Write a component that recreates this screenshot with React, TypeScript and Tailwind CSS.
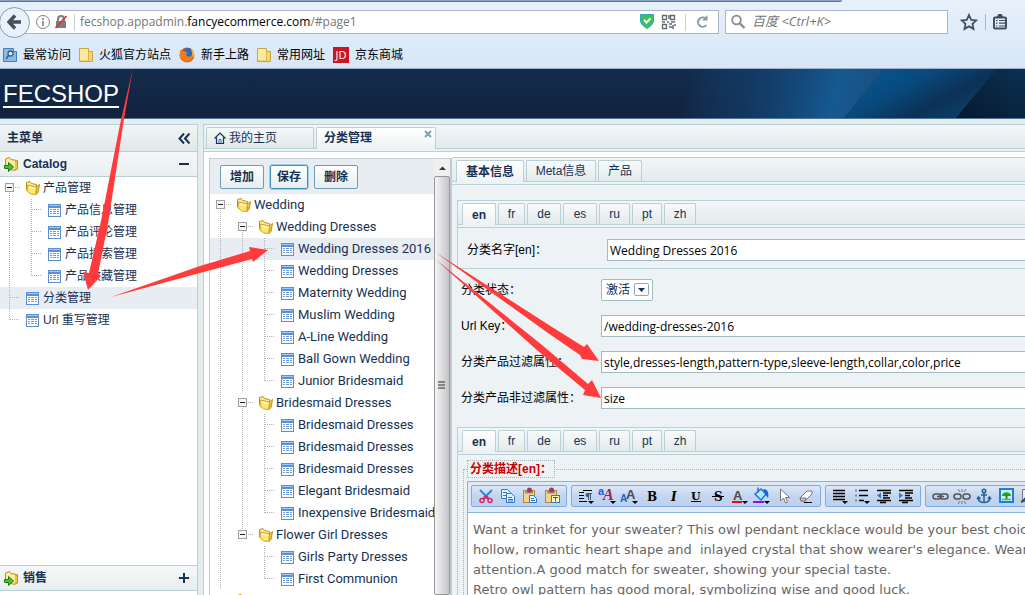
import React, { useState } from "react";

const line = "border-[#b8d0d6]";
const cjk = "font-['Liberation_Sans','Noto_Sans_CJK_SC',sans-serif]";

type Cell = "line" | "branch" | "last" | "minus" | "none" | "minusLast";
type Row = { label: string; cells: Cell[]; folder?: boolean; active?: boolean };

const menuRows: Row[] = [
  { label: "产品管理", cells: ["minus"], folder: true },
  { label: "产品信息管理", cells: ["line", "branch"] },
  { label: "产品评论管理", cells: ["line", "branch"] },
  { label: "产品搜索管理", cells: ["line", "branch"] },
  { label: "产品收藏管理", cells: ["line", "last"] },
  { label: "分类管理", cells: ["branch"], active: true },
  { label: "Url 重写管理", cells: ["last"] },
];

const leaf = (label: string, last = false, parentLine = true, active = false): Row => ({
  label,
  cells: ["line", parentLine ? "line" : "none", last ? "last" : "branch"],
  active,
});

const categoryRows: Row[] = [
  { label: "Wedding", cells: ["minus"], folder: true },
  { label: "Wedding Dresses", cells: ["line", "minus"], folder: true },
  leaf("Wedding Dresses 2016", false, true, true),
  leaf("Wedding Dresses"),
  leaf("Maternity Wedding"),
  leaf("Muslim Wedding"),
  leaf("A-Line Wedding"),
  leaf("Ball Gown Wedding"),
  leaf("Junior Bridesmaid", true),
  { label: "Bridesmaid Dresses", cells: ["line", "minus"], folder: true },
  leaf("Bridesmaid Dresses"),
  leaf("Bridesmaid Dresses"),
  leaf("Bridesmaid Dresses"),
  leaf("Elegant Bridesmaid"),
  leaf("Inexpensive Bridesmaid", true),
  { label: "Flower Girl Dresses", cells: ["line", "minusLast"], folder: true },
  leaf("Girls Party Dresses", false, false),
  leaf("First Communion", true, false),
  { label: "", cells: ["minus"], folder: true },
];

function TreeCell({ kind }: { kind: Cell }) {
  const box = kind === "minus" || kind === "minusLast";
  return (
    <svg width="22" height="22" className="shrink-0" aria-hidden="true" shapeRendering="crispEdges">
      <g stroke="#b4b4b4" strokeDasharray="1 1" fill="none">
        {(kind === "line" || kind === "branch") && <path d="M10.5 0V22" />}
        {kind === "last" && <path d="M10.5 0V11" />}
        {kind === "minus" && <path d="M10.5 16V22" />}
        {kind === "minusLast" && <path d="M10.5 0V6" />}
        {(kind === "branch" || kind === "last") && <path d="M11 10.5H21" />}
        {box && <path d="M16 10.5H21" />}
      </g>
      {box && (
        <>
          <rect x="6.5" y="6.5" width="8" height="8" rx="1" fill="#f6f6f6" stroke="#a0a0a0" />
          <path d="M8 10.5h5" stroke="#222" />
        </>
      )}
    </svg>
  );
}

function FolderIcon() {
  return (
    <svg width="22" height="22" className="shrink-0" aria-hidden="true">
      <path d="M5.5 5.500l3.500-1 1.500 2 5 1v7l-6 1-4-2.500z" fill="#fbeb9a" stroke="#bd8f1e" />
      <path d="M15.500 10l3-2.500-1.500 8-2 2z" fill="#f3c93e" stroke="#bd8f1e" />
      <path d="M6.500 8l9 2-.800 7.500-5-.500-3.700-3z" fill="#fde86e" stroke="#d3a52a" />
      <path d="M8 10l6 1.500" stroke="#fff9d0" strokeWidth="1.500" />
    </svg>
  );
}

function SheetIcon() {
  return (
    <svg width="22" height="22" className="shrink-0" aria-hidden="true" shapeRendering="crispEdges">
      <rect x="5.500" y="5.500" width="12" height="12" fill="#fff" stroke="#5b8fd2" />
      <rect x="5" y="5" width="13" height="4" fill="#5b8fd2" />
      <path d="M6 6.500h11" stroke="#a4c8f0" />
      <path d="M7 10.500h9M7 12.500h9M7 14.500h9" stroke="#6f9ad0" />
      <path d="M9.500 9v8M13.500 9v8" stroke="#fff" />
    </svg>
  );
}

function Tree({ rows, font }: { rows: Row[]; font: string }) {
  return (
    <ul className={font}>
      {rows.map((r, i) => (
        <li key={i} className={`flex h-[22px] items-center whitespace-nowrap ${r.active ? "bg-[#e8ecf3]" : ""}`}>
          {r.cells.map((c, j) => (
            <TreeCell key={j} kind={c} />
          ))}
          {r.folder ? <FolderIcon /> : <SheetIcon />}
          <a href="#page1" className="leading-[22px] text-[#183152]">{r.label}</a>
        </li>
      ))}
    </ul>
  );
}

function TabStrip({ pad, children }: { pad: string; children: React.ReactNode }) {
  return (
    <div className={`border-t ${line}`}>
      <div className={`flex h-6 gap-[2px] border-b bg-gradient-to-b from-[#f2f6f8] to-[#e3ebec] ${line} ${pad} pt-[2px]`}>
        {children}
      </div>
      <div className={`h-[3px] border-b bg-[#edf2f4] ${line}`} />
    </div>
  );
}

function Tab({ label, active, width, onClick }: { label: string; active: boolean; width: string; onClick: () => void }) {
  return (
    <button
      type="button"
      onClick={onClick}
      className={`${width} shrink-0 rounded-t-[2px] border border-b-0 text-center text-[12px] leading-[20px] text-[#183152] ${line} ${
        active ? "-mb-px bg-gradient-to-b from-white to-[#edf2f4] font-bold" : "bg-gradient-to-b from-[#f7fafa] to-[#e2eaeb]"
      }`}
    >
      {label}
    </button>
  );
}

const langs: [string, string][] = [
  ["en", "w-[34px]"],
  ["fr", "w-[27px]"],
  ["de", "w-[34px]"],
  ["es", "w-[34px]"],
  ["ru", "w-[31px]"],
  ["pt", "w-[30px]"],
  ["zh", "w-[32px]"],
];

function LangTabs() {
  const [cur, setCur] = useState("en");
  return (
    <TabStrip pad="pl-1">
      {langs.map(([l, w]) => (
        <Tab key={l} label={l} width={w} active={cur === l} onClick={() => setCur(l)} />
      ))}
    </TabStrip>
  );
}

const inputCls =
  "h-[22px] w-[640px] shrink-0 border border-[#a2bac0] bg-white px-[2px] font-['Open_Sans','Noto_Sans_CJK_SC',sans-serif] text-[12px] text-black outline-none";

function Field({ id, label, value }: { id: string; label: string; value: string }) {
  return (
    <div className="flex h-[22px] items-center">
      <label htmlFor={id} className="w-[140px] shrink-0">{label}</label>
      <input id={id} className={inputCls} defaultValue={value} />
    </div>
  );
}

function ToolButton({ name, children }: { name: string; children: React.ReactNode }) {
  return (
    <button type="button" title={name} aria-label={name} className="flex h-5 w-[22px] items-center justify-center">
      <svg width="20" height="20" aria-hidden="true">{children}</svg>
    </button>
  );
}

function ToolGroup({ children }: { children: React.ReactNode }) {
  return (
    <div className="flex h-[22px] shrink-0 rounded-[2px] border border-[#7fabe0] bg-gradient-to-b from-[#dde7f6] via-[#c3d5f0] to-[#bcd1ee] px-[3px]">
      {children}
    </div>
  );
}

const caret = <path d="M12 15h6l-3 3z" fill="#000" />;

function EditorToolbar() {
  return (
    <div className="flex gap-1 overflow-hidden border-b border-[#8cb2e4] bg-[#e0e9f7] px-[3px] pt-[3px] pb-[5px]">
      <ToolGroup>
        <ToolButton name="剪切">
          <path d="M4 4l9 9M16 4L7 13" stroke="#2f86d8" strokeWidth="2" />
          <path d="M8 10l4 3M12 10l-4 3" stroke="#d7266a" strokeWidth="1.500" />
          <circle cx="6" cy="14.500" r="2" fill="none" stroke="#d7266a" strokeWidth="1.500" />
          <circle cx="14" cy="14.500" r="2" fill="none" stroke="#d7266a" strokeWidth="1.500" />
        </ToolButton>
        <ToolButton name="复制">
          <path d="M3.500 3.500h6l3 3v6h-9z" fill="#e4f1ff" stroke="#2a7bd0" />
          <path d="M8.500 7.500h5l3 3v6h-8z" fill="#e4f1ff" stroke="#2a7bd0" />
          <path d="M5 6.500h4M5 9.500h3M10 11.500h4M10 13.500h5M10 15h5" stroke="#2a7bd0" />
        </ToolButton>
        <ToolButton name="粘贴">
          <rect x="3.500" y="4.500" width="11" height="12" fill="#f2d58a" stroke="#b1873c" />
          <path d="M5 4.500h8v3H5z" fill="#9a8a92" />
          <circle cx="9.500" cy="4" r="2.500" fill="#a13763" />
          <path d="M9.500 9.500h4l3 3v4h-7z" fill="#e4f1ff" stroke="#2a7bd0" />
          <path d="M11 12.500h3M11 14.500h4" stroke="#2a7bd0" />
        </ToolButton>
        <ToolButton name="粘贴文本">
          <rect x="3.500" y="4.500" width="11" height="12" fill="#f2d58a" stroke="#b1873c" />
          <path d="M5 4.500h8v3H5z" fill="#9a8a92" />
          <circle cx="9.500" cy="4" r="2.500" fill="#a13763" />
          <rect x="9.500" y="9.500" width="8" height="7" fill="#fff6b8" stroke="#2a7bd0" />
          <path d="M11 11.500h5M13.500 11.500v4" stroke="#1c5eb0" />
        </ToolButton>
      </ToolGroup>
      <ToolGroup>
        <ToolButton name="段落标签">
          <path d="M3 6.500h5M3 9.500h5M3 12.500h5M3 15.500h8M7 4.500h9" stroke="#000" />
          <path d="M11 7.500h5M12.500 7v7M14.500 7v7" stroke="#44587a" />
          <circle cx="11.500" cy="9" r="2" fill="#44587a" />
          {caret}
        </ToolButton>
        <ToolButton name="字体">
          <text x="0" y="9" fontSize="11" fontWeight="bold" fontFamily="Liberation Sans" fill="#1265d8">a</text>
          <text x="5" y="14" fontSize="16" fontWeight="bold" fontStyle="italic" fontFamily="Liberation Serif" fill="#a2214f">A</text>
          {caret}
        </ToolButton>
        <ToolButton name="字体大小">
          <text x="0" y="16" fontSize="10" fontWeight="bold" fontFamily="Liberation Sans" fill="#1265d8">A</text>
          <text x="6" y="13" fontSize="13" fontWeight="bold" fontFamily="Liberation Sans" fill="#4b4b4b">A</text>
          {caret}
        </ToolButton>
        <ToolButton name="加粗">
          <text x="5" y="15" fontSize="12" fontWeight="bold" fontFamily="DejaVu Serif">B</text>
        </ToolButton>
        <ToolButton name="斜体">
          <text x="7" y="15" fontSize="12" fontWeight="bold" fontStyle="italic" fontFamily="DejaVu Serif">I</text>
        </ToolButton>
        <ToolButton name="下划线">
          <text x="5" y="14" fontSize="11" fontWeight="bold" fontFamily="DejaVu Serif">U</text>
          <path d="M5 15.500h10" stroke="#000" />
        </ToolButton>
        <ToolButton name="删除线">
          <text x="6" y="15" fontSize="12" fontWeight="bold" fontFamily="DejaVu Serif">S</text>
          <path d="M4 10.500h12" stroke="#000" />
        </ToolButton>
        <ToolButton name="字体颜色">
          <text x="3" y="14" fontSize="13" fontWeight="bold" fontFamily="Liberation Sans" fill="#4b4b4b">A</text>
          <path d="M2 16h10" stroke="#e01010" strokeWidth="2" />
          {caret}
        </ToolButton>
        <ToolButton name="背景颜色">
          <path d="M3 8l6-5 5 5-5 6z" fill="#bfe2ff" stroke="#1b78d4" strokeWidth="1.500" />
          <path d="M11 3c5 0 6 4 5 9l-3-4z" fill="#1565d8" />
          <path d="M6 1.500v5" stroke="#1b78d4" strokeWidth="1.500" />
          <path d="M1 16h11" stroke="#8a12e8" strokeWidth="2" />
          {caret}
        </ToolButton>
        <ToolButton name="全选">
          <path d="M6.500 3v12l3-3 2 5 2-1-2-4.500h4z" fill="#fff" stroke="#777" />
        </ToolButton>
        <ToolButton name="删除文字格式">
          <path d="M4 12l7-7h5v3l-7 7H5z" fill="#fafafa" stroke="#777" />
          <path d="M4 12l1 3h4l1-3z" fill="#c9c9c9" stroke="#777" />
          <path d="M8 16.500h8" stroke="#000" />
        </ToolButton>
      </ToolGroup>
      <ToolGroup>
        <ToolButton name="对齐">
          <path d="M3 4.500h12M3 7.500h12M3 10.500h12M3 13.500h12" stroke="#000" strokeWidth="1.300" />
          {caret}
        </ToolButton>
        <ToolButton name="列表">
          <path d="M7 4.500h9M7 9.500h9M7 14.500h5" stroke="#000" strokeWidth="1.300" />
          <path d="M3 4.500h2M3 9.500h2M3 14.500h2" stroke="#7d8ba5" strokeWidth="2" />
          {caret}
        </ToolButton>
        <ToolButton name="减少缩进">
          <path d="M3 4.500h14M9 7h8M9 9.500h5M9 12h7M3 14.500h14M6 16.500h6" stroke="#000" strokeWidth="1.300" />
          <path d="M7 6.500v6L3 9.500z" fill="#2a7bd0" />
        </ToolButton>
        <ToolButton name="增加缩进">
          <path d="M3 4.500h14M9 7h8M9 9.500h5M9 12h7M3 14.500h14M6 16.500h6" stroke="#000" strokeWidth="1.300" />
          <path d="M3 6.500v6l4-3z" fill="#2a7bd0" />
        </ToolButton>
      </ToolGroup>
      <ToolGroup>
        <ToolButton name="超链接">
          <rect x="3" y="8" width="8" height="5" rx="2.500" fill="none" stroke="#555" strokeWidth="1.500" />
          <rect x="10" y="8" width="8" height="5" rx="2.500" fill="none" stroke="#555" strokeWidth="1.500" />
          <path d="M7 10.500h7" stroke="#555" strokeWidth="1.500" />
        </ToolButton>
        <ToolButton name="取消超链接">
          <rect x="2" y="8" width="7" height="5" rx="2.500" fill="none" stroke="#555" strokeWidth="1.500" />
          <rect x="11" y="8" width="7" height="5" rx="2.500" fill="none" stroke="#555" strokeWidth="1.500" />
          <path d="M10 3v3M6 3l2 3M14 3l-2 3M10 18v-3M6 18l2-3M14 18l-2-3M8 12l4-3" stroke="#777" />
        </ToolButton>
        <ToolButton name="锚点">
          <g fill="none" stroke="#2b649c" strokeWidth="1.600">
            <circle cx="10" cy="5" r="1.700" />
            <path d="M10 7v9M7 9h6M4 11c0 4 3 5.500 6 5.500s6-1.500 6-5.500M3 13l1.500-2 2 2M14 13l1.500-2 1.500 2" />
          </g>
        </ToolButton>
        <ToolButton name="图片">
          <rect x="4" y="3" width="13" height="13" fill="#c7f0ef" stroke="#1f7de0" strokeWidth="2" />
          <path d="M6 10c0-5 9-5 9 0z" fill="#27a027" />
          <path d="M10.500 9v4" stroke="#3b7d2a" strokeWidth="2" />
          <path d="M6 13.500h9" stroke="#58b848" strokeWidth="1.500" />
        </ToolButton>
        <ToolButton name="动画">
          <path d="M4.500 3.500h10v12h-10z" fill="#eee" stroke="#777" />
          <path d="M3 16c3-1 5-4 7-8" stroke="#345" strokeWidth="2" fill="none" />
        </ToolButton>
        <ToolButton name="表格">
          <rect x="3.500" y="3.500" width="12" height="12" fill="#fff" stroke="#777" />
        </ToolButton>
      </ToolGroup>
    </div>
  );
}

function YellowFolder() {
  return (
    <svg width="14" height="16" aria-hidden="true">
      <path d="M.5 1.500h9v3h4v10H.5z" fill="#f3d66c" stroke="#c9a646" />
      <path d="M1 2h8v11H1z" fill="#fbeaa0" />
      <path d="M9.500 5v9" stroke="#d9b653" />
    </svg>
  );
}

const bookmarks: { label: string; icon: React.ReactNode }[] = [
  {
    label: "最常访问",
    icon: (
      <svg width="14" height="16" aria-hidden="true">
        <path d="M.5 1.500h10v3h3v10H.5z" fill="#8dbbe0" stroke="#4580b3" />
        <circle cx="7.500" cy="6.500" r="2.500" fill="#d8ecfb" stroke="#2f6390" strokeWidth="1.300" />
        <path d="M5.500 8.500L3 12" stroke="#2f6390" strokeWidth="1.600" />
      </svg>
    ),
  },
  { label: "火狐官方站点", icon: <YellowFolder /> },
  {
    label: "新手上路",
    icon: (
      <svg width="16" height="16" aria-hidden="true">
        <circle cx="8" cy="8" r="7.500" fill="#e2601a" />
        <circle cx="9" cy="6" r="5" fill="#2a6cb8" />
        <path d="M1 3c1 1 2 1 3 1 2-.5 3 1 5 2l-2 1.500c1 3 5 3 7-1 .5 6-4 8-7 8S1 12 1 8z" fill="#ee7d1b" />
        <path d="M12 2c3 2 4 6 2 9-.5-3-1-6-2-9z" fill="#fbc52e" />
      </svg>
    ),
  },
  { label: "常用网址", icon: <YellowFolder /> },
  {
    label: "京东商城",
    icon: (
      <span className="flex h-4 w-4 items-center justify-center bg-[#c81623] text-[11px] leading-4 text-white">JD</span>
    ),
  },
];

function BrowserChrome() {
  return (
    <div className="flex h-[69px] shrink-0 flex-col border-b border-[#9fb0c6] bg-gradient-to-b from-[#e8f1fb] to-[#d7e6f7] font-['Open_Sans','Noto_Sans_CJK_SC',sans-serif]">
      <div className="h-[2px] w-[842px] shrink-0 rounded-br-[3px] border-b border-[#5f7690] bg-[#8ba3bf]" />
      <div className="flex h-10 shrink-0 items-center">
        <button type="button" aria-label="后退" className="z-10 -ml-px flex h-[31px] w-[31px] shrink-0 items-center justify-center rounded-full border border-[#8e9cb0] bg-[#e9f1fa]">
          <svg width="17" height="16" aria-hidden="true">
            <path d="M9 1.500L3 8l6 6.500M3.500 8H15" fill="none" stroke="#45505f" strokeWidth="3.400" />
          </svg>
        </button>
        <div className="-ml-4 flex h-6 min-w-0 flex-1 items-center border border-[#a9b6c8] bg-white pl-5">
          <svg width="45" height="22" className="shrink-0" aria-hidden="true">
            <circle cx="8" cy="11" r="6.500" fill="none" stroke="#808080" />
            <path d="M8 7v2M8 10v5" stroke="#808080" strokeWidth="1.600" />
            <rect x="21" y="10" width="10" height="7" fill="#7d7d7d" />
            <path d="M23 10V8a3 3 0 0 1 6 0v2" fill="none" stroke="#7d7d7d" strokeWidth="2" />
            <path d="M20.500 17L31.500 5" stroke="#d9343a" strokeWidth="1.800" />
            <path d="M39.500 3v17" stroke="#ccc" />
          </svg>
          <div className="min-w-0 flex-1 text-[12px] leading-5 whitespace-nowrap text-[#767676]">
            fecshop.appadmin.<span className="text-black">fancyecommerce.com</span>/#page1
          </div>
          <svg width="79" height="22" className="shrink-0" aria-hidden="true">
            <path d="M1.500 3.500h13v7q-1 4-6.500 7-5.500-3-6.500-7z" fill="#3fbf5f" stroke="#2ba6c4" />
            <path d="M5 9l2.500 2.500 4-4" fill="none" stroke="#fff" strokeWidth="2" />
            <g fill="none" stroke="#5f6a75" strokeWidth="1.300">
              <path d="M23.500 4.500h4v4h-4zM31.500 4.500h4v4h-4zM23.500 13.500h4v4h-4z" />
              <path d="M23 11h3M28 11h2M30 4v4M32 11h4M30 13h3M34 14v4M30 16h3M36 13v2" strokeWidth="1.500" />
            </g>
            <path d="M46.500 3v17" stroke="#ccc" />
            <path d="M66.500 7.500a4.600 4.600 0 1 0 .8 6.500" fill="none" stroke="#8b98a6" strokeWidth="2" />
            <path d="M63 9.500h5.500v-5.500z" fill="#8b98a6" />
          </svg>
        </div>
        <label className="ml-[6px] flex h-6 w-[223px] shrink-0 items-center border border-[#a9b6c8] bg-white">
          <svg width="26" height="20" className="shrink-0" aria-hidden="true">
            <circle cx="10.500" cy="8" r="4.300" fill="none" stroke="#8a8a8a" strokeWidth="1.800" />
            <path d="M13.500 11l5 5" stroke="#8a8a8a" strokeWidth="2.400" />
          </svg>
          <input aria-label="搜索" placeholder="百度 <Ctrl+K>" className="w-full min-w-0 text-[13px] italic outline-none placeholder:text-[#757575]" />
        </label>
        <svg width="77" height="24" className="shrink-0" aria-hidden="true">
          <path d="M21 5l2.200 4.800 5 .600-3.700 3.500 1 5-4.500-2.500-4.500 2.500 1-5-3.700-3.500 5-.600z" fill="none" stroke="#454f5c" strokeWidth="1.800" />
          <path d="M37.500 4v16" stroke="#a9b6c8" />
          <rect x="46" y="7.500" width="12" height="11" rx="1" fill="none" stroke="#454f5c" strokeWidth="2" />
          <path d="M48.500 7l2-3h3l2 3z" fill="#454f5c" />
          <path d="M48 10.500h1.500M51 10.500h6M48 13.200h1.500M51 13.200h6M48 16h1.500M51 16h6" stroke="#454f5c" strokeWidth="1.200" />
        </svg>
      </div>
      <div className="flex h-[26px] items-center gap-2 pl-[3px] text-[12px] text-black">
        {bookmarks.map((b) => (
          <a key={b.label} href="#page1" className="flex items-center gap-[6px]">
            {b.icon}
            <span>{b.label}</span>
          </a>
        ))}
      </div>
    </div>
  );
}

function ShopHeader() {
  return (
    <header className="relative h-[50px] shrink-0 overflow-hidden border-b border-[#4d7590] bg-gradient-to-b from-[#122c4b] to-[#12223f]">
      <svg className="absolute top-0 right-0" width="405" height="49" aria-hidden="true">
        <defs>
          <linearGradient id="glow" gradientUnits="userSpaceOnUse" x1="70" y1="0" x2="260" y2="50">
            <stop offset="0" stopColor="#155a92" stopOpacity="0" />
            <stop offset=".3" stopColor="#13467a" stopOpacity=".5" />
            <stop offset=".75" stopColor="#155a92" />
            <stop offset="1" stopColor="#1c4c78" />
          </linearGradient>
          <linearGradient id="band" x1="0" x2="1" y1="0" y2=".6">
            <stop offset="0" stopColor="#075a97" />
            <stop offset=".45" stopColor="#08497c" />
            <stop offset=".75" stopColor="#0c3156" />
            <stop offset="1" stopColor="#0a4068" />
          </linearGradient>
          <linearGradient id="edge" x1="0" x2="1" y1="1" y2="0">
            <stop offset="0" stopColor="#07192e" />
            <stop offset="1" stopColor="#0a3153" />
          </linearGradient>
        </defs>
        <path d="M0 0H265L224 49H0z" fill="url(#glow)" />
        <path d="M265 0H377L336 49H224z" fill="url(#band)" />
        <path d="M377 0H405V49H336z" fill="url(#edge)" />
      </svg>
      <a href="#page1" className="relative ml-[3px] block w-fit border-b-2 border-white pt-3 text-[24px] leading-[25px] text-white">
        FECSHOP
      </a>
    </header>
  );
}

function MenuFolderIcon() {
  return (
    <svg width="15" height="17" aria-hidden="true">
      <path d="M1.500 3l4-1.500 1.500 2 5 .800v9l-3 1-7.500-4z" fill="#fbeb9a" stroke="#bd8f1e" />
      <path d="M11.500 5.500l2-1v8.500l-3 1.500" fill="#f3c93e" stroke="#bd8f1e" />
      <path d="M.5 9.500h4v-3l5 4.500-5 4.500v-3h-4z" fill="#4cc22a" stroke="#1d7d12" />
    </svg>
  );
}

function MenuHeader({ label, open }: { label: string; open: boolean }) {
  return (
    <button type="button" className={`flex h-[25px] w-full shrink-0 items-center border-b bg-gradient-to-b from-[#f4f8f9] to-[#e9eef0] pr-[7px] pl-1 text-left text-[12px] font-bold text-[#183152] ${line}`}>
      <MenuFolderIcon />
      <span className="ml-1 flex-1">{label}</span>
      <svg width="11" height="11" aria-hidden="true">
        <path d={open ? "M0 5h10" : "M0 5h10M5 0v10"} stroke="#183152" strokeWidth="2" />
      </svg>
    </button>
  );
}

function Sidebar() {
  return (
    <nav className={`flex w-[198px] shrink-0 flex-col border-t border-r bg-white ${line}`}>
      <div className={`flex h-[27px] shrink-0 items-center justify-between border-b bg-gradient-to-b from-[#f0f5f5] to-[#dfe8ea] pr-[7px] pl-[7px] ${line}`}>
        <h2 className="text-[12px] font-bold text-[#183152]">主菜单</h2>
        <button type="button" aria-label="收起">
          <svg width="12" height="11" className="block">
            <path d="M6 .500L1.500 5.500 6 10.500M11.500 .500L7 5.500l4.500 5" fill="none" stroke="#183152" strokeWidth="2" />
          </svg>
        </button>
      </div>
      <MenuHeader label="Catalog" open />
      <div className="-ml-px min-h-0 flex-1">
        <Tree rows={menuRows} font="text-[12px]" />
      </div>
      <div className={`border-t pb-1 ${line}`}>
        <MenuHeader label="销售" open={false} />
      </div>
    </nav>
  );
}

const actionCls =
  "h-6 rounded-[2px] border bg-gradient-to-b from-white to-[#e6eef1] text-[12px] font-bold text-[#183152]";

function CategoryPanel() {
  return (
    <section className="mt-[6px] flex w-[243px] shrink-0 overflow-hidden border-t border-r-2 border-l border-t-[#c5cdd2] border-r-[#c3c9cc] border-l-[#c3c9cc] bg-white">
      <div className="min-w-0 flex-1 overflow-hidden">
        <div className="flex h-[35px] gap-[6px] bg-[#e8edf2] pt-[6px] pl-[10px]">
          <button type="button" className={`${actionCls} w-[44px] border-[#6f9fb6]`}>增加</button>
          <button type="button" className={`${actionCls} w-[38px] border-[#3c8fb4] outline-1 outline-[#9fd0e6]`}>保存</button>
          <button type="button" className={`${actionCls} w-[44px] border-[#6f9fb6]`}>删除</button>
        </div>
        <Tree rows={categoryRows} font="font-['Roboto',sans-serif] text-[13px]" />
      </div>
      <div className="flex w-4 shrink-0 flex-col bg-[#f0f0f0]" aria-hidden="true">
        <svg width="16" height="17" className="shrink-0">
          <path d="M5 11h7L8.500 7.500z" fill="#333" />
        </svg>
        <div className="flex flex-1 items-center justify-center rounded-[2px] border border-[#979797] bg-gradient-to-r from-[#f5f5f5] to-[#c4c4ca]">
          <svg width="8" height="9">
            <path d="M0 1h7M0 4h7M0 7h7" stroke="#666" strokeWidth="1.500" />
          </svg>
        </div>
      </div>
    </section>
  );
}

const description = [
  "Want a trinket for your sweater? This owl pendant necklace would be your best choice",
  "hollow, romantic heart shape and  inlayed crystal that show wearer's elegance. Wear",
  "attention.A good match for sweater, showing your special taste.",
  "Retro owl pattern has good moral, symbolizing wise and good luck.",
].join("\n");

function CategoryForm() {
  const [tab, setTab] = useState("基本信息");
  const tabs: [string, string][] = [
    ["基本信息", "w-[68px]"],
    ["Meta信息", "w-[70px]"],
    ["产品", "w-[44px]"],
  ];
  return (
    <section className="mt-[5px] flex min-w-0 flex-1 flex-col overflow-hidden bg-[#edf2f5] text-[12px] text-black">
      <TabStrip pad="pl-1">
        {tabs.map(([t, w]) => (
          <Tab key={t} label={t} width={w} active={tab === t} onClick={() => setTab(t)} />
        ))}
      </TabStrip>
      <div className="flex min-h-0 flex-1 flex-col pt-[15px] pl-[5px]">
        <div className={`-mr-2 shrink-0 border-b border-l ${line}`}>
          <LangTabs />
          <div className="pt-[11px] pb-[7px] pl-[9px]">
            <Field id="name" label="分类名字[en]：" value="Wedding Dresses 2016" />
          </div>
        </div>
        <div className="mt-[10px] flex shrink-0 flex-col gap-[14px] pl-1">
          <div className="flex h-[22px] items-center">
            <label htmlFor="status" className="w-[140px] shrink-0">分类状态：</label>
            <div className="relative">
              <select id="status" className="block h-[22px] w-[52px] appearance-none rounded-[2px] border border-[#a2bac0] bg-white pl-1 text-[12px] text-[#183152]">
                <option>激活</option>
                <option>关闭</option>
              </select>
              <svg width="15" height="13" className="pointer-events-none absolute top-[4px] right-[4px]" aria-hidden="true">
                <rect x=".5" y=".5" width="14" height="12" rx="1.500" fill="#fff" stroke="#8fa9b4" />
                <path d="M4 5h7L7.500 9z" fill="#183152" />
              </svg>
            </div>
          </div>
          <Field id="urlkey" label="Url Key：" value="/wedding-dresses-2016" />
          <Field id="filter" label="分类产品过滤属性：" value="style,dresses-length,pattern-type,sleeve-length,collar,color,price" />
          <Field id="nofilter" label="分类产品非过滤属性：" value="size" />
        </div>
        <div className={`mt-[18px] -mr-2 flex min-h-0 flex-1 flex-col border-l ${line}`}>
          <LangTabs />
          <fieldset className="mt-[5px] ml-[5px] min-w-0 border border-dotted border-[#a9b5b8] px-[3px] pt-[3px]">
            <legend className="h-[18px] border border-dotted border-[#a9b5b8] px-[2px] leading-4 font-bold text-[#c00]">
              <label htmlFor="description">分类描述[en]：</label>
            </legend>
            <div className="border border-[#8cb2e4] bg-white">
              <EditorToolbar />
              <textarea
                id="description"
                wrap="off"
                defaultValue={description}
                className="block h-[120px] w-full resize-none overflow-hidden px-[5px] pt-[7px] font-['DejaVu_Sans',sans-serif] text-[13px] leading-5 text-[#666] outline-none"
              />
            </div>
          </fieldset>
        </div>
      </div>
    </section>
  );
}

function Workspace() {
  return (
    <main className={`ml-[5px] flex min-w-0 flex-1 flex-col border-l bg-white ${line}`}>
      <TabStrip pad="pl-[2px]">
        <a href="#home" className={`flex w-[108px] items-center rounded-t-[2px] border border-b-0 bg-gradient-to-b from-[#f4f8f8] to-[#e0e9ea] pl-[7px] text-[12px] text-[#183152] ${line}`}>
          <svg width="12" height="12" className="mr-[3px]" aria-hidden="true">
            <path d="M.500 6.500L6 1l5.500 5.500M2.500 5.500v6h7v-6" fill="none" stroke="#183152" strokeWidth="1.200" />
            <path d="M5 11V7.500h2V11" fill="none" stroke="#2a6fd0" />
          </svg>
          我的主页
        </a>
        <div className={`-mb-px flex w-[120px] justify-between rounded-t-[2px] border border-b-0 bg-gradient-to-b from-white to-[#edf2f4] pr-[3px] pl-[7px] ${line}`}>
          <a href="#page1" className="text-[12px] leading-[20px] font-bold text-[#183152]">分类管理</a>
          <button type="button" aria-label="关闭" className="mt-[2px] h-2">
            <svg width="8" height="8" className="block">
              <path d="M1 1l6 6M7 1L1 7" stroke="#7c9dac" strokeWidth="1.800" />
            </svg>
          </button>
        </div>
      </TabStrip>
      <div className="flex min-h-0 flex-1 pl-[5px]">
        <CategoryPanel />
        <CategoryForm />
      </div>
    </main>
  );
}

function Arrows() {
  return (
    <svg className="pointer-events-none absolute top-0 left-0 z-20" width="1025" height="595" aria-hidden="true">
      <g fill="#ff3b3b">
        <path d="M133 68L123.500 122L108.500 221L98 274L101 276L88 290L83 272L89 273L101 221L120.500 122z" />
        <path d="M111 297L200 266L250 251L249 247L268 250L253 262L252 259L200 273z" />
        <path d="M435 252L552 327L584 347L587 344L599 361L582 359L580 355L548 333z" />
        <path d="M435 259L542 345L588 384L592 380L601 398L583 395L585 390L538 351z" />
      </g>
    </svg>
  );
}

export default function App() {
  return (
    <div className={`relative flex h-screen flex-col overflow-hidden bg-[#e5eced] ${cjk}`}>
      <BrowserChrome />
      <ShopHeader />
      <div className="flex min-h-0 flex-1 pt-[5px]">
        <Sidebar />
        <Workspace />
      </div>
      <Arrows />
    </div>
  );
}
